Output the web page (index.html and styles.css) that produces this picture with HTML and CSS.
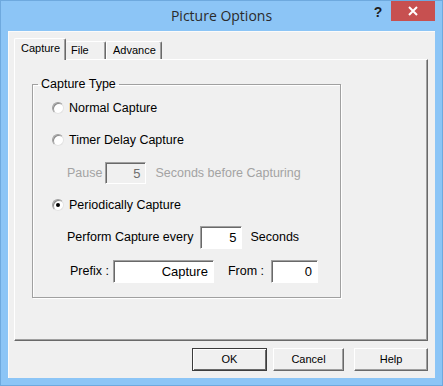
FILE: index.html
```html
<!DOCTYPE html>
<html>
<head>
	<meta charset="utf-8">
	<title>Picture Options</title>
	<link rel="stylesheet" href="styles.css">
</head>
<body>
	<div class="window">
		<div class="titlebar">
			<div></div>
			<div class="title">Picture Options</div>
			<div class="controls">
				<span class="help-btn">?</span>
				<span class="close-btn">
					<svg width="10" height="10" viewBox="0 0 10 10">
						<path d="M1 1 L9 9 M9 1 L1 9" stroke="#fff" stroke-width="2" fill="none"/>
					</svg>
				</span>
			</div>
		</div>

		<div class="client">
			<div class="tabs">
				<div class="tab active">Capture</div>
				<div class="tab tab-file">File</div>
				<div class="tab tab-advance">Advance</div>
			</div>

			<div class="panel">
				<fieldset class="group">
					<legend>Capture Type</legend>

					<div class="row">
						<span class="radio"></span>
						<span class="radio-label">Normal Capture</span>
					</div>
					<div class="row">
						<span class="radio"></span>
						<span class="radio-label">Timer Delay Capture</span>
					</div>
					<div class="row sub-row disabled row-pause">
						<span>Pause</span>
						<span class="field field-pause">5</span>
						<span class="after-field after-pause">Seconds before Capturing</span>
					</div>
					<div class="row">
						<span class="radio checked"></span>
						<span class="radio-label">Periodically Capture</span>
					</div>
					<div class="row sub-row">
						<span>Perform Capture every</span>
						<span class="field field-every">5</span>
						<span class="after-field">Seconds</span>
					</div>
					<div class="row sub-row row-prefix">
						<span>Prefix :</span>
						<span class="field field-prefix">Capture</span>
						<span class="from-label">From :</span>
						<span class="field field-from">0</span>
					</div>
				</fieldset>
			</div>

			<div class="buttons">
				<div class="btn btn-ok">OK</div>
				<div class="btn btn-cancel">Cancel</div>
				<div class="btn btn-help">Help</div>
			</div>
		</div>
	</div>
</body>
</html>
```

FILE: styles.css
```css
html, body {
	margin: 0;
	padding: 0;
	background-color: #8cc5f6;
}

body {
	font-family: "Liberation Sans", Arial, sans-serif;
	font-size: 12.5px;
	color: #000;
}

.window {
	width: 443px;
	height: 386px;
	box-sizing: border-box;
	border: 1px solid #6ea9de;
	background-color: #8cc5f6;
	display: flex;
	flex-direction: column;
}

/* title bar */
.titlebar {
	height: 30px;
	display: grid;
	grid-template-columns: 1fr auto 1fr;
}
.title {
	align-self: center;
	font-family: "Open Sans", "Noto Sans", sans-serif;
	font-size: 14px;
	color: #2b2b2b;
	padding-bottom: 1px;
}
.controls {
	justify-self: end;
	display: flex;
	align-items: flex-start;
	padding-right: 7px;
}
.help-btn {
	width: 26px;
	height: 20px;
	line-height: 22px;
	text-align: center;
	font-family: "Liberation Sans", Arial, sans-serif;
	font-weight: bold;
	font-size: 14px;
	color: #1e1e1e;
}
.close-btn {
	width: 44px;
	height: 20px;
	background-color: #c75050;
	display: flex;
	justify-content: center;
	align-items: center;
}

/* client area */
.client {
	flex: 1;
	margin: 0 7px 7px 7px;
	background-color: #f0f0f0;
	box-shadow: inset 1px 1px 0 #fbfbfb;
	padding: 7px 7px 0 6px;
	display: flex;
	flex-direction: column;
}

/* tabs */
.tabs {
	height: 22px;
	margin-bottom: -1px;
	display: flex;
	align-items: flex-end;
	font-size: 11px;
}
.tab {
	box-sizing: border-box;
	height: 18px;
	margin-bottom: 1px;
	border-top: 1px solid #fff;
	border-left: 1px solid #fff;
	border-right: 1px solid #696969;
	box-shadow: inset -1px 0 0 #a0a0a0;
	border-radius: 2px 2px 0 0;
	padding-left: 5px;
	line-height: 17px;
	background-color: #f0f0f0;
}
.tab.active {
	position: relative;
	z-index: 1;
	height: 22px;
	margin-bottom: 0;
	width: 52px;
	padding-left: 6px;
	line-height: 19px;
}
.tab-file {
	width: 40px;
	border-left: none;
}
.tab-advance {
	width: 56px;
	padding-left: 6px;
}

/* tab page */
.panel {
	box-sizing: border-box;
	height: 282px;
	border-top: 1px solid #fff;
	border-left: 1px solid #fff;
	border-right: 1px solid #696969;
	border-bottom: 1px solid #696969;
	box-shadow: inset -1px -1px 0 #a0a0a0;
}

/* group box */
.group {
	box-sizing: border-box;
	width: 309px;
	margin: 17px 0 0 17px;
	padding: 0 0 8px 0;
	border: 1px solid #a0a0a0;
	box-shadow: inset 1px 1px 0 #fff, 1px 1px 0 #fff;
}
.group legend {
	margin-left: 5px;
	padding: 0 3px;
	line-height: 15px;
}

.row {
	height: 32px;
	display: flex;
	align-items: center;
	padding-left: 19px;
}
.row-pause {
	height: 33px;
}
.sub-row {
	padding-left: 34px;
}
.row.row-prefix {
	height: 36px;
	padding-left: 37px;
}
.disabled {
	color: #a3a3a3;
}

/* radio buttons */
.radio {
	box-sizing: border-box;
	width: 12px;
	height: 12px;
	border-radius: 50%;
	background-color: #fff;
	border: 1px solid;
	border-color: #a0a0a0 #e3e3e3 #e3e3e3 #a0a0a0;
	box-shadow: inset 1px 1px 0 #8a8a8a;
	display: flex;
	justify-content: center;
	align-items: center;
}
.radio.checked::after {
	content: '';
	width: 4px;
	height: 4px;
	border-radius: 50%;
	background-color: #000;
}
.radio-label {
	margin-left: 5px;
}

/* edit fields */
.field {
	box-sizing: border-box;
	height: 23px;
	line-height: 21px;
	background-color: #fff;
	border: 1px solid;
	border-color: #a0a0a0 #fff #fff #a0a0a0;
	box-shadow: inset 1px 1px 0 #696969;
	text-align: right;
	padding-right: 5px;
	font-size: 13px;
}
.field-pause {
	width: 41px;
	height: 22px;
	margin-left: 3px;
	background-color: #f0f0f0;
	color: #6d6d6d;
}
.field-every {
	width: 42px;
	margin-left: 7px;
}
.field-prefix {
	width: 101px;
	margin-left: 4px;
}
.field-from {
	width: 47px;
	margin-left: 7px;
}
.after-field {
	margin-left: 8px;
}
.after-pause {
	margin-left: 9px;
}
.from-label {
	margin-left: 14px;
}

/* dialog buttons */
.buttons {
	margin-top: 7px;
	display: flex;
	justify-content: flex-end;
	font-size: 11px;
}
.btn {
	box-sizing: border-box;
	height: 23px;
	line-height: 21px;
	text-align: center;
	border: 1px solid;
	border-color: #fff #696969 #696969 #fff;
	box-shadow: inset -1px -1px 0 #a0a0a0;
}
.btn-ok {
	width: 75px;
	border-color: #3c3c3c;
	box-shadow: inset 1px 1px 0 #fff, inset -1px -1px 0 #696969;
}
.btn-cancel {
	width: 71px;
	margin-left: 6px;
}
.btn-help {
	width: 74px;
	margin-left: 10px;
}
```
